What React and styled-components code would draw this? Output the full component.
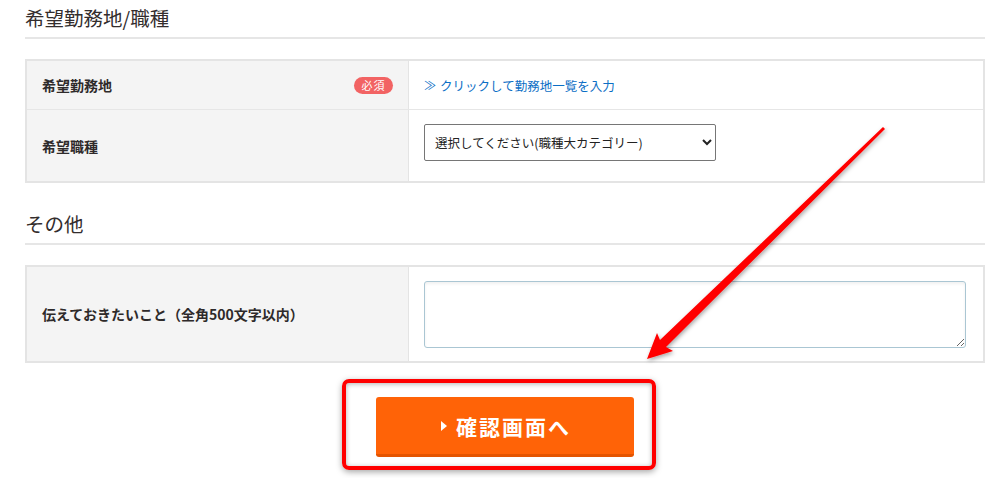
import React from "react";
import styled, { createGlobalStyle } from "styled-components";

const GlobalStyle = createGlobalStyle`
  html, body {
    margin: 0;
    padding: 0;
    background: #fff;
  }
  body {
    font-family: "Noto Sans CJK JP", "Noto Sans", "Liberation Sans", sans-serif;
    color: #333;
  }
`;

const Page = styled.div`
  position: relative;
  width: 1004px;
  height: 478px;
  overflow: hidden;
`;

const Content = styled.div`
  width: 960px;
  padding: 4px 0 0 25px;
`;

const SectionTitle = styled.h2`
  margin: ${(p) => (p.$first ? "0" : "27px")} 0 0;
  padding: 0 0 6px;
  font-size: 19.5px;
  font-weight: 400;
  line-height: 27px;
  color: #332d2d;
  border-bottom: 2px solid #e6e6e6;
`;

const FormTable = styled.div`
  margin-top: 20px;
  border: 2px solid #e4e4e4;
`;

const Row = styled.div`
  display: grid;
  grid-template-columns: 382px 1fr;
  min-height: ${(p) => p.$height}px;
  & + & {
    border-top: 1px solid #e6e6e6;
  }
`;

const Label = styled.div`
  display: flex;
  align-items: center;
  justify-content: space-between;
  padding: 0 15px;
  background: #f4f4f4;
  border-right: 1px solid #e4e4e4;
  font-size: 14px;
  font-weight: 700;
  color: #2e2a2a;
`;

const Required = styled.span`
  display: inline-flex;
  align-items: center;
  justify-content: center;
  width: 39px;
  height: 17px;
  border-radius: 9px;
  background: #f26363;
  color: #fff;
  font-size: 11px;
  font-weight: 400;
  letter-spacing: 1px;
`;

const Value = styled.div`
  display: flex;
  align-items: ${(p) => (p.$top ? "flex-start" : "center")};
  padding: ${(p) => p.$pad || "0 15px"};
`;

const Link = styled.a`
  display: inline-flex;
  align-items: center;
  gap: 4px;
  color: #0b6ec5;
  font-size: 12.5px;
  text-decoration: none;
  cursor: pointer;
`;

const Chevrons = styled.span`
  font-size: 12px;
  line-height: 1;
`;

const Select = styled.select`
  width: 292px;
  height: 37px;
  padding: 0 6px;
  border: 1px solid #767676;
  border-radius: 2px;
  background: #fff;
  font-family: inherit;
  font-size: 12.5px;
  color: #222;
`;

const TextArea = styled.textarea`
  box-sizing: border-box;
  width: 542px;
  height: 67px;
  border: 1px solid #aac6d3;
  border-radius: 3px;
  box-shadow: inset 0 2px 3px rgba(0, 0, 0, 0.06);
  font-family: inherit;
  font-size: 13px;
`;

const ButtonArea = styled.div`
  display: flex;
  justify-content: center;
  margin-top: 34px;
`;

const ButtonWrap = styled.div`
  position: relative;
`;

const SubmitButton = styled.button`
  display: flex;
  align-items: center;
  justify-content: center;
  gap: 9px;
  width: 258px;
  height: 60px;
  padding: 0 0 0 2px;
  border: none;
  border-bottom: 3px solid #e45400;
  border-radius: 3px;
  background: #ff6307;
  color: #fff;
  font-family: inherit;
  font-size: 21px;
  font-weight: 700;
  letter-spacing: 2px;
  cursor: pointer;
`;

const Triangle = styled.span`
  width: 0;
  height: 0;
  border-top: 5px solid transparent;
  border-bottom: 5px solid transparent;
  border-left: 6px solid #fff;
  margin-top: 1px;
`;

const Highlight = styled.div`
  position: absolute;
  left: -34px;
  top: -18px;
  width: 314px;
  height: 91px;
  box-sizing: border-box;
  border: 4px solid #ff0000;
  border-radius: 7px;
  box-shadow: 0 2px 6px rgba(0, 0, 0, 0.35), inset 0 1px 5px rgba(0, 0, 0, 0.3);
  pointer-events: none;
`;

const ArrowLayer = styled.svg`
  position: absolute;
  left: 0;
  top: 0;
  pointer-events: none;
`;

export default function App() {
  return (
    <Page>
      <GlobalStyle />
      <Content>
        <SectionTitle $first>希望勤務地/職種</SectionTitle>
        <FormTable>
          <Row $height={48}>
            <Label>
              希望勤務地
              <Required>必須</Required>
            </Label>
            <Value>
              <Link>
                <Chevrons>≫</Chevrons>クリックして勤務地一覧を入力
              </Link>
            </Value>
          </Row>
          <Row $height={71}>
            <Label>希望職種</Label>
            <Value $top $pad="14px 15px 0">
              <Select defaultValue="">
                <option value="">選択してください(職種大カテゴリー)</option>
              </Select>
            </Value>
          </Row>
        </FormTable>

        <SectionTitle>その他</SectionTitle>
        <FormTable>
          <Row $height={94}>
            <Label>伝えておきたいこと（全角500文字以内）</Label>
            <Value $top $pad="14px 15px 0">
              <TextArea />
            </Value>
          </Row>
        </FormTable>

        <ButtonArea>
          <ButtonWrap>
            <SubmitButton>
              <Triangle />
              確認画面へ
            </SubmitButton>
            <Highlight />
          </ButtonWrap>
        </ButtonArea>
      </Content>

      <ArrowLayer width="1004" height="478" viewBox="0 0 1004 478">
        <defs>
          <filter id="arrowShadow" x="-20%" y="-20%" width="140%" height="140%">
            <feDropShadow dx="1" dy="2" stdDeviation="2" floodColor="#000" floodOpacity="0.35" />
          </filter>
        </defs>
        <polygon
          points="647,359 673,351 666,347 885,129 883,127 660,340 657,333"
          fill="#ff0000"
          filter="url(#arrowShadow)"
        />
      </ArrowLayer>
    </Page>
  );
}
